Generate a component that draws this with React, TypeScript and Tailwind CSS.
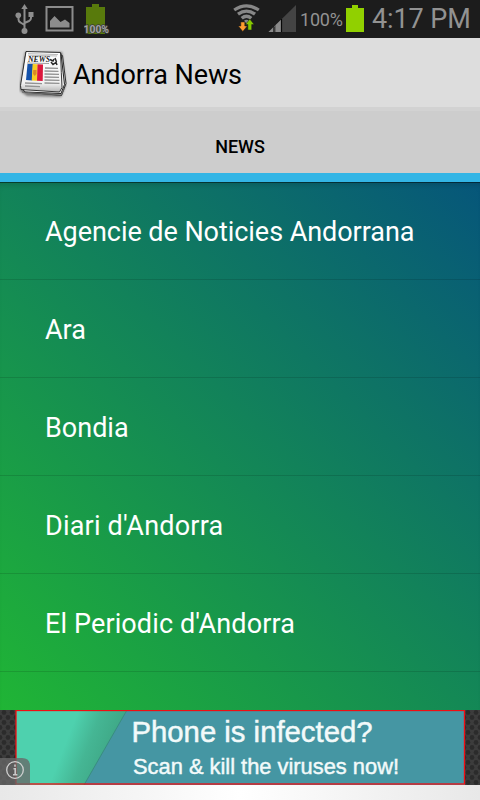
import React from "react";

const sources: { name: string; spacing: string }[] = [
  { name: "Agencie de Noticies Andorrana", spacing: "tracking-[-0.05px]" },
  { name: "Ara", spacing: "tracking-[0px]" },
  { name: "Bondia", spacing: "tracking-[0px]" },
  { name: "Diari d'Andorra", spacing: "tracking-[0.2px]" },
  { name: "El Periodic d'Andorra", spacing: "tracking-[0.12px]" },
];

function UsbIcon() {
  return (
    <svg width="20" height="32" viewBox="0 0 20 32" fill="none" stroke="#8e8e8e" strokeWidth="2">
      <path d="M9.500 5v23M3.500 13v3.500q0 2 2 3l4 2.500M16 12v3q0 2-2 3L9.500 20" />
      <path d="M9.500 1l3.200 5H6.300z" fill="#8e8e8e" stroke="none" />
      <circle cx="3.300" cy="12.200" r="2.800" fill="#8e8e8e" stroke="none" />
      <circle cx="9.500" cy="28" r="3" fill="#8e8e8e" stroke="none" />
      <path d="M13.500 9h5v5h-5z" fill="#8e8e8e" stroke="none" />
    </svg>
  );
}

function PictureIcon() {
  return (
    <svg width="29" height="27" viewBox="0 0 29 27">
      <rect x="1.500" y="2" width="26" height="23.500" fill="none" stroke="#8c8c8c" strokeWidth="2" />
      <path d="M5 22.500V16l4.500-5 6 6 4.500-2.500 4.500 3.500v4.500z" fill="#8c8c8c" />
    </svg>
  );
}

function BatterySmall() {
  return (
    <svg width="30" height="34" viewBox="0 0 30 34">
      <path d="M8 2h7v3h6v27H2V5h6z" fill="#587a0c" />
      <text x="-0.500" y="30.500" textLength="25.500" lengthAdjust="spacingAndGlyphs" fontFamily="Roboto, sans-serif" fontSize="10" fontWeight="700" fill="#a3a3a3" stroke="#3a3a3a" strokeWidth="1.500" paintOrder="stroke">
        100%
      </text>
    </svg>
  );
}

function WifiIcon() {
  return (
    <svg width="27" height="30" viewBox="0 0 27 30" fill="none">
      <g stroke="#878787" strokeWidth="3.300">
        <path d="M1.200 8q12.300-8.200 24.600 0" />
        <path d="M5 12.200q8.500-6.200 17 0" />
        <path d="M8.700 16.200q4.800-4 9.600 0" />
      </g>
      <path d="M11 18.700q2.500-2 5 0l-2.500 3z" fill="#878787" />
      <path d="M7.800 20h4v4h2.500l-4.500 5.500L5.300 24h2.500z" fill="#ff9c2e" stroke="#1c1c1c" strokeWidth="0.500" />
      <path d="M14.900 28v-5.500H12.500l4.300-5.500 4.300 5.500h-2.400v5.500z" fill="#86c900" stroke="#1c1c1c" strokeWidth="0.500" />
    </svg>
  );
}

function SignalIcon() {
  return (
    <svg width="29" height="28" viewBox="0 0 29 28">
      <path d="M0.500 27L28 0v27z" fill="#444" />
      <path d="M0.500 27L14 13.700V27z" fill="#8a8a8a" />
      <path d="M6 21.500v5.500M13.500 14v13" stroke="#080808" strokeWidth="1.200" />
      <path d="M7.500 20v7" stroke="#666" />
    </svg>
  );
}

function NewspaperIcon() {
  return (
    <svg width="48" height="50" viewBox="0 0 48 50">
      <defs>
        <filter id="soft" x="-20%" y="-20%" width="140%" height="140%">
          <feGaussianBlur stdDeviation="1" />
        </filter>
        <linearGradient id="fold" x1="0" y1="0" x2="0" y2="1">
          <stop offset="0" stopColor="#fff" />
          <stop offset="0.780" stopColor="#f1f1f1" />
          <stop offset="1" stopColor="#b5b5b5" />
        </linearGradient>
      </defs>
      <path d="M6 2L1 35v6l7 5 34 1 5-12-4-33z" fill="#444" opacity="0.650" filter="url(#soft)" />
      <path d="M8 2.500l35.500 3 3.500 28-4.500 12-36-3.500-4-5z" fill="#d8d8d8" stroke="#333" />
      <path d="M7 2l35 1.500 3.500 31-3.500 9-36-1.500-4-5z" fill="#efefef" stroke="#222" />
      <path d="M7 1.500l34.500 1 .800 20 .700 15-2.500 4.500L2 39.500l-.500-4z" fill="url(#fold)" stroke="#252525" strokeWidth="0.900" />
      <path d="M3 42l39 3 3-6" fill="none" stroke="#666" />
      <path d="M9 3.600l30 1M9 5.200l29 .800" stroke="#aaa" strokeWidth="0.800" />
      <text x="9" y="12" textLength="22" lengthAdjust="spacingAndGlyphs" fontFamily="Liberation Serif, serif" fontSize="8.500" fontWeight="700" fontStyle="italic" fill="#181818">
        NEWS
      </text>
      <path d="M31 9.500l3 1.500 1-2M32 12l2 2.500 3-2 1 2.500M36 8l1.500 4" stroke="#292929" strokeWidth="1.500" fill="none" />
      <path d="M8 13l22 .500" stroke="#777" strokeWidth="0.700" />
      <path d="M8.500 14l5.500.100-.800 16.500-6.200-.600z" fill="#1452ab" />
      <path d="M13.700 14.100l5 .100-.500 16.500-5.500-.200z" fill="#f6cd23" />
      <path d="M18.500 14.200l5.500.200-.300 16.600-5.700-.300z" fill="#db173d" />
      <path d="M14.200 20h3.300v4l-1.700 2-1.700-2z" fill="#d88926" />
      <path d="M26 18l13 .300M25.500 21l14 .300M25.500 24l14.500.300M25.500 27l14.500.300M25.500 30l15 .300M25.500 33l15 .300M6 33l17 .700M6 36l15 .700" stroke="#929292" strokeWidth="1.300" />
    </svg>
  );
}

function StatusBar() {
  return (
    <header className="flex h-[38px] shrink-0 items-start bg-[#1c1c1c]">
      <div className="ml-[15px] mt-[3px]"><UsbIcon /></div>
      <div className="ml-[10px] mt-[5px]"><PictureIcon /></div>
      <div className="ml-[10px] mt-[2px]"><BatterySmall /></div>
      <div className="ml-[119px] mt-[2px]"><WifiIcon /></div>
      <div className="ml-[8px] mt-[5px]"><SignalIcon /></div>
      <span className="ml-[3px] mt-[9px] w-[43px] whitespace-nowrap text-[18px] leading-[22px] tracking-[-0.2px] text-[#929292]">100%</span>
      <svg className="ml-[3px] mt-[5px]" width="18" height="27" viewBox="0 0 18 27">
        <path d="M6 0h6v3h6v24H0V3h6z" fill="#91d000" />
      </svg>
      <span className="ml-[8px] mt-[3px] whitespace-nowrap text-[27px] leading-[32px] tracking-[-0.1px] text-[#929292]">4:17 PM</span>
    </header>
  );
}

function Advert() {
  return (
    <section className="relative flex h-[75px] shrink-0 bg-[#303030]">
      <svg className="h-[75px] w-[480px]" viewBox="0 0 480 75">
        <defs>
          <pattern id="mesh" width="8" height="10" patternUnits="userSpaceOnUse">
            <rect width="8" height="10" fill="#3c3c3c" />
            <circle cx="4" cy="2.500" r="2.400" fill="#2b2b2b" />
            <circle cx="0" cy="7.500" r="2.400" fill="#2b2b2b" />
            <circle cx="8" cy="7.500" r="2.400" fill="#2b2b2b" />
          </pattern>
          <linearGradient id="mint" gradientUnits="userSpaceOnUse" x1="66" y1="32" x2="107" y2="48">
            <stop offset="0" stopColor="#4ed1ae" />
            <stop offset="0.500" stopColor="#45b694" />
            <stop offset="1" stopColor="#3fa987" />
          </linearGradient>
        </defs>
        <rect width="480" height="75" fill="url(#mesh)" />
        <rect x="16" width="449" height="75" fill="#4596a3" />
        <path d="M16 0h111L84 75H16z" fill="url(#mint)" />
        <path d="M127 0L84 75" stroke="#398d80" strokeWidth="1" />
        <rect x="16" y="0.500" width="448.500" height="73.500" fill="none" stroke="#f20d12" strokeWidth="1.300" />
        <g fontFamily="Liberation Sans, Arial, sans-serif" fill="#f2fafa" stroke="#f2fafa">
          <text x="131.500" y="32" fontSize="30" textLength="241" lengthAdjust="spacingAndGlyphs" strokeWidth="0.500">Phone is infected?</text>
          <text x="133" y="64" fontSize="22" textLength="266" lengthAdjust="spacingAndGlyphs" strokeWidth="0.450">Scan &amp; kill the viruses now!</text>
        </g>
        <path d="M0 48h22q8 0 8 8v19H0z" fill="#686868" fillOpacity="0.780" />
        <circle cx="15" cy="60" r="8.300" fill="none" stroke="#d0d0d0" strokeWidth="1.300" />
        <path d="M15 54.500v2.300M13.500 58.700h1.700v6M13 64.700h4.400" fill="none" stroke="#c8c8c8" strokeWidth="1.600" />
      </svg>
    </section>
  );
}

export default function App() {
  return (
    <main className="flex h-[800px] w-[480px] flex-col overflow-hidden font-['Roboto',sans-serif]">
      <StatusBar />
      <div className="flex h-[69px] shrink-0 items-start bg-[#ddd]">
        <div className="ml-[19px] mt-[12px]"><NewspaperIcon /></div>
        <h1 className="ml-[6px] mt-[21px] whitespace-nowrap text-[27px] leading-[32px] tracking-[-0.1px] text-black">Andorra News</h1>
      </div>
      <nav className="flex h-[75px] shrink-0 justify-center border-b-[9px] border-t-4 border-b-[#33b5e5] border-t-[#d2d2d2] bg-[#cdcdcd]">
        <span className="mt-[25px] text-[18px] font-medium leading-[22px] text-black">NEWS</span>
      </nav>
      <ul className="h-[528px] shrink-0 overflow-hidden bg-[linear-gradient(45deg,#20b535,#06567a)] shadow-[inset_0_1px_0_rgba(0,0,0,0.45),inset_0_6px_6px_-4px_rgba(0,0,0,0.18)]">
        {sources.map((source) => (
          <li key={source.name} className="h-[98px] border-b border-black/12 pl-[45px] pt-[34px] text-[27px] leading-[32px] text-white">
            <span className={source.spacing}>{source.name}</span>
          </li>
        ))}
      </ul>
      <Advert />
      <footer className="h-[15px] shrink-0 bg-[linear-gradient(90deg,#e8e8e8,#fff_50%,#e8e8e8)]" />
    </main>
  );
}
